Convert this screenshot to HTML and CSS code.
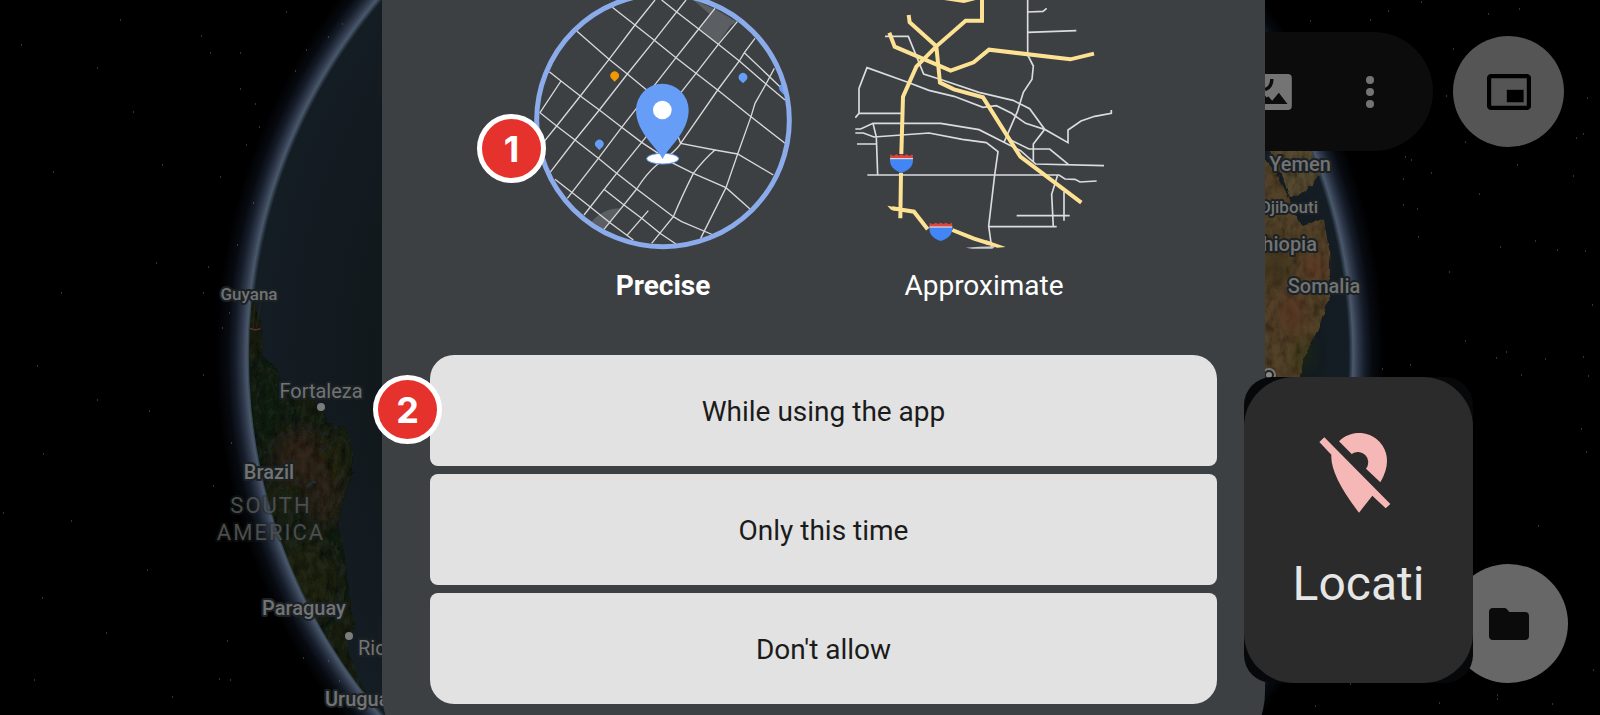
FILE: index.html
```html
<!DOCTYPE html>
<html lang="en">
<head>
<meta charset="utf-8">
<meta name="viewport" content="width=device-width, initial-scale=1">
<title>Location permission</title>
<link rel="stylesheet" href="styles.css">
</head>
<body>
<div class="stage">
  <svg class="globe" viewBox="0 0 1600 715" preserveAspectRatio="xMidYMid slice" aria-hidden="true">
    <defs>
      <radialGradient id="halo" gradientUnits="userSpaceOnUse" cx="800" cy="356" r="584">
        <stop offset="0.947" stop-color="#4b586b"/>
        <stop offset="0.956" stop-color="#2f394b"/>
        <stop offset="0.967" stop-color="#161d2a"/>
        <stop offset="0.98" stop-color="#070a10"/>
        <stop offset="1" stop-color="#000"/>
      </radialGradient>
      <radialGradient id="sea" gradientUnits="userSpaceOnUse" cx="800" cy="356" r="553">
        <stop offset="0.7" stop-color="#101719"/>
        <stop offset="0.88" stop-color="#131b21"/>
        <stop offset="0.992" stop-color="#141d23"/>
        <stop offset="1" stop-color="#46566a"/>
      </radialGradient>
      <clipPath id="disc"><circle cx="800" cy="356" r="551"/></clipPath>
      <filter id="soft" x="-50%" y="-50%" width="200%" height="200%"><feGaussianBlur stdDeviation="24"/></filter>
      <filter id="coast" x="-10%" y="-10%" width="120%" height="120%">
        <feTurbulence type="fractalNoise" baseFrequency="0.05 0.03" numOctaves="4" seed="4" result="n"/>
        <feDisplacementMap in="SourceGraphic" in2="n" scale="14" xChannelSelector="R" yChannelSelector="G" result="d"/>
        <feColorMatrix in="n" type="matrix" values="0 0 0 0 0  0 0 0 0 0  0 0 0 0 0  1.2 0 0 0 -0.45" result="dark"/>
        <feComposite in="dark" in2="d" operator="in" result="tex"/>
        <feMerge><feMergeNode in="d"/><feMergeNode in="tex"/></feMerge>
      </filter>
      <clipPath id="america"><path d="M150 90L165 130L182 190L190 290L230 325L245 370L320 400L365 445L385 490L435 505L455 570L460 640L430 720L415 800L432 880L440 950L465 1100L440 1150L470 1250L500 1300L380 1300L60 700L60 90Z"/></clipPath>
    </defs>
    <rect width="1600" height="715" fill="#000"/>
    <circle cx="800" cy="356" r="584" fill="url(#halo)"/>
    <circle cx="800" cy="356" r="553" fill="url(#sea)"/>
    <g clip-path="url(#disc)">
      <g transform="translate(200 260) scale(.3333)">
        <g filter="url(#coast)">
          <g clip-path="url(#america)">
            <rect x="0" y="0" width="560" height="1400" fill="#1a2119"/>
            <g filter="url(#soft)">
              <ellipse cx="300" cy="590" rx="70" ry="80" fill="#33251a"/>
              <ellipse cx="370" cy="700" rx="50" ry="90" fill="#2e261a"/>
              <ellipse cx="420" cy="580" rx="40" ry="80" fill="#222719"/>
              <ellipse cx="320" cy="960" rx="90" ry="120" fill="#242617"/>
              <ellipse cx="200" cy="450" rx="50" ry="120" fill="#172014"/>
              <ellipse cx="240" cy="720" rx="40" ry="60" fill="#222719"/>
            </g>
          </g>
        </g>
        <path d="M150 205l16 5 16-4M146 235v-15" stroke="#5c3130" stroke-width="4" fill="none"/>
        <path d="M165 130l-6 75M182 130l-14 75" stroke="#33291c" stroke-width="2" fill="none"/>
        <path d="M320 680l14-10 8-8M338 662l10 8" stroke="#1d3038" stroke-width="6" fill="none"/>
      </g>
      <g transform="translate(1220 0) scale(.3333)">
        <path d="M0 450H60L136 480L170 520L205 590L228 650L248 678L312 655L328 760L325 900L290 1000L250 1080L235 1160H0Z" fill="#524329" filter="url(#coast)"/>
        <path d="M150 450H285L305 520L270 560L240 585L210 595L190 540Z" fill="#544a33" filter="url(#coast)"/>
        <g filter="url(#soft)" opacity=".7">
          <ellipse cx="285" cy="800" rx="26" ry="34" fill="#6a3120"/>
          <ellipse cx="215" cy="940" rx="35" ry="60" fill="#5a3023"/>
          <ellipse cx="250" cy="1060" rx="18" ry="50" fill="#26300f"/>
          <ellipse cx="170" cy="800" rx="40" ry="60" fill="#382f18"/>
        </g>
      </g>
    </g>
    <circle cx="1269" cy="375" r="6" fill="#222" stroke="#777" stroke-width="2"/>
    <circle cx="1269" cy="375" r="3" fill="#888"/>
    <path class="stars" d="M286 12h1M201 36h1M210 53h1M240 53h1M328 37h1M342 24h1M306 50h1M295 71h1M240 89h1M255 104h1M259 127h1M246 145h1M220 177h1M253 203h1M237 245h1M208 267h1M203 293h1M229 313h1M222 328h1M203 375h1M231 443h1M213 486h1M227 641h1M303 658h1M219 679h1M230 680h1M328 661h1M339 681h1M53 172h1M97 68h1M133 112h1M61 293h1M156 263h1M37 366h1M97 400h1M149 411h1M43 454h1M71 521h1M3 513h1M42 598h1M106 633h1M147 570h1M34 680h1M172 697h1M21 45h1M120 20h1M162 165h1M1310 21h1M1370 20h1M1388 11h1M1421 2h1M1488 14h1M1519 9h1M1453 49h1M1446 96h1M1587 98h1M1576 138h1M1583 134h1M1405 157h1M1411 160h1M1403 179h1M1431 173h1M1403 205h1M1417 209h1M1465 142h1M1517 165h1M1573 176h1M1479 194h1M1418 237h1M1500 247h1M1557 250h1M1585 251h1M1449 272h1M1535 241h1M1592 305h1M1465 341h1M1506 352h1M1545 359h1M1583 357h1M1410 365h1M1382 369h1M1496 358h1M1521 375h1M1588 376h1M1581 429h1M1586 452h1M1538 526h1M1593 670h1M1497 695h1M1497 699h1M1552 704h1M1315 706h1M1350 684h1M1439 703h1"/>
    <circle class="city" cx="321" cy="407" r="4"/>
    <circle class="city" cx="349" cy="636" r="4"/>
    <g class="places">
      <text class="place small mid" x="249" y="300">Guyana</text>
      <text class="place town mid" x="321" y="398">Fortaleza</text>
      <text class="place mid" x="269" y="479">Brazil</text>
      <text class="place region mid" x="271" y="513">SOUTH</text>
      <text class="place region mid" x="271" y="540">AMERICA</text>
      <text class="place mid" x="304" y="615">Paraguay</text>
      <text class="place town" x="358" y="655">Rio</text>
      <text class="place" x="325" y="706">Uruguay</text>
      <text class="place mid" x="1300" y="171">Yemen</text>
      <text class="place small end" x="1318" y="213">Djibouti</text>
      <text class="place end" x="1317" y="251">Ethiopia</text>
      <text class="place mid" x="1324" y="293">Somalia</text>
    </g>
  </svg>

  <header class="toolbar">
    <div class="pill">
      <button class="icon-button" type="button" aria-label="Imagery">
        <svg width="44" height="36" viewBox="86 219 131 108"><rect x="86" y="219" width="131" height="108" rx="12" fill="#747474"/><path d="M104 309L130 275L142 290L146 286L158 299L178 275L204 309Z" fill="#0c0c0c"/><path d="M157 234Q157 258 137 266" fill="none" stroke="#0c0c0c" stroke-width="10"/></svg>
      </button>
      <button class="icon-button" type="button" aria-label="More options">
        <svg width="10" height="34" viewBox="0 0 10 34"><g fill="#747474"><circle cx="5" cy="5" r="4"/><circle cx="5" cy="17" r="4"/><circle cx="5" cy="29" r="4"/></g></svg>
      </button>
    </div>
    <button class="round pip" type="button" aria-label="Picture in picture">
      <svg width="44" height="36" viewBox="801 221 131 107"><rect x="807" y="227" width="119" height="95" rx="7" fill="none" stroke="#000" stroke-width="13"/><rect x="860" y="268" width="50" height="37"/></svg>
    </button>
  </header>

  <button class="round files" type="button" aria-label="Files">
    <svg width="40" height="32" viewBox="806 772 120 96"><path d="M818 772H852Q857 772 860 776L867 784H914Q926 784 926 796V856Q926 868 914 868H818Q806 868 806 856V784Q806 772 818 772Z" fill="#0b0b0b"/></svg>
  </button>

  <main class="dialog">
    <div class="accuracy" role="radiogroup" aria-label="Location accuracy">
      <label class="choice">
        <input class="choice-input" type="radio" name="accuracy" checked>
        <svg class="choice-map" viewBox="222 0 774 750">
          <defs><clipPath id="lens"><circle cx="609" cy="361" r="376"/></clipPath></defs>
          <g clip-path="url(#lens)">
            <path d="M700 0L765 27L830 65L810 78L775 130L720 88L752 45ZM395 665Q430 625 482 625L432 688Z" fill="#5b5f63"/>
            <path class="street" d="M585 0L525 75L447 178L361 288L290 378L240 440M678 0L583 121L502 222L418 330L345 420L268 520M765 25L716 87L648 173L485 382L415 475L322 595M832 65L775 133L708 220L545 427L470 520L372 645M885 115L853 158L838 183L773 270L662 430Q650 452 590 495Q560 520 530 567L490 617L432 688M655 412L662 430L765 450L833 462L940 525M943 205L918 252L885 310L873 350L833 462L798 563L722 715M853 158L985 284M457 22L525 75L583 121L648 173L708 220L773 270L873 350L975 430M350 93L447 178L502 222L560 270M268 215L303 243L361 288L418 330L485 382L545 427L640 490L700 520L798 563L870 627M303 243L240 338L290 378L345 420L415 475L470 520L530 567L640 650L665 665L760 705M765 450Q735 475 700 520Q665 590 640 650L575 730M285 538L335 577L390 620L450 668L520 720M432 568L492 615L545 655L600 700L648 732M565 632L545 655L500 707M605 0L650 36L716 87L775 133L838 183L918 252L975 300"/>
            <path d="M464 245L453 234A13 13 0 1 1 475 234Z" fill="#f29900"/>
            <path d="M849 250L838 239A13 13 0 1 1 860 239ZM418 450L407 439A13 13 0 1 1 429 439ZM975 288L960 272A13 13 0 0 1 965 252Z" fill="#669df6"/>
          </g>
          <circle cx="609" cy="361" r="379" fill="none" stroke="#8babeb" stroke-width="15"/>
          <ellipse cx="608" cy="476" rx="48" ry="16" fill="#fff" stroke="#669df6" stroke-width="3"/>
          <path d="M608 478C596 445 528 400 528 330A79 79 0 0 1 686 330C686 400 620 445 608 478Z" fill="#669df6"/>
          <circle cx="607" cy="330" r="28" fill="#fff"/>
        </svg>
        <span class="choice-name">Precise</span>
        <span class="badge">1</span>
      </label>
      <label class="choice">
        <input class="choice-input" type="radio" name="accuracy">
        <svg class="choice-map" viewBox="78 0 774 750">
          <path class="road" d="M596 0V165L613 198L609 238L583 277L565 335L526 425M596 36L642 34L653 25M596 97L742 92M168 109H238L284 222L340 240L450 277L552 301L602 326L647 388L717 428V390L756 363L797 349L847 340V330M79 353L90 340V265L114 203L232 245L300 271L375 289L462 322L502 317L548 340L590 370L647 388L613 432V487M90 340H218M79 387H95L132 370H335L450 389L575 452L620 492L825 497M79 399H103L135 411L300 399L400 418L472 428L507 455L497 525L479 678L488 742M132 370L142 411L146 525M84 432H142M115 525H690L708 537L738 538L753 546L803 543M545 420L600 447H662L718 493M686 525L668 583L673 682M705 575V662M563 647H722M479 680H683"/>
          <path d="M410 743L450 740L500 739L490 746H430Z" fill="#c8cacd"/>
          <path class="highway" d="M459 0V62H410L322 139L262 200L222 290L217 462M239 45L242 67L322 139L333 248L375 268L462 292L574 470L757 608M181 98L197 140L365 212L434 187L480 149L724 178L795 161M216 518L214 655M190 625L255 635L296 688M370 690L435 716L480 730"/>
          <path d="M345 0H440L405 9ZM175 617L200 622V632L186 629ZM472 721L530 741L505 743L470 733Z" fill="#fde293"/>
          <g id="shield">
            <path d="M184 463L193 468L203 463L209 467L217 463L226 467L232 463L242 468L251 463L252 476H183Z" fill="#e0443a"/>
            <path d="M183 476H252Q254 507 217 518Q181 507 183 476Z" fill="#4285f4"/>
            <path d="M183 476H252" stroke="#eee" stroke-width="3"/>
          </g>
          <use href="#shield" x="118" y="205"/>
        </svg>
        <span class="choice-name">Approximate</span>
      </label>
    </div>
    <div class="actions">
      <button class="action" type="button">While using the app<span class="badge">2</span></button>
      <button class="action" type="button">Only this time</button>
      <button class="action" type="button">Don't allow</button>
    </div>
  </main>

  <aside class="tile">
    <div class="tile-face">
      <svg width="80" height="80" viewBox="297 248 240 240"><path fill="#f6b8b6" d="M298 275L313 261L511 461L497 474L457 436L417 487Q330 375 334 313ZM357 273A84 84 0 0 1 501 333Q501 362 481 396L438 355A31 31 0 0 0 395 311Z"/></svg>
      <span class="tile-name">Locati</span>
    </div>
  </aside>
</div>
</body>
</html>
```
FILE: styles.css
```css
* { box-sizing: border-box; }

body {
  margin: 0;
  background: #000;
  color: #fff;
  font-family: Roboto, sans-serif;
}

button {
  padding: 0;
  border: 0;
  font: inherit;
  cursor: pointer;
}

svg { display: block; }

.stage {
  position: relative;
  height: 100vh;
  padding-left: 47px;
  overflow: hidden;
}

/* Map behind the dialog */
.globe {
  position: absolute;
  inset: 0;
  width: 100%;
  height: 100%;
}

.stars {
  fill: none;
  stroke: #6a6a6a;
  stroke-width: 1;
}

.city { fill: #7b7d7c; }

.place {
  fill: #717375;
  stroke: #1c2123;
  stroke-width: 4px;
  stroke-linejoin: round;
  paint-order: stroke;
  font-size: 20px;
  font-weight: 500;
}

.small { font-size: 17px; }
.town { font-weight: 400; }
.mid { text-anchor: middle; }
.end { text-anchor: end; }

.region {
  fill: #4b4e4b;
  stroke-opacity: 0.4;
  font-size: 22px;
  font-weight: 400;
  letter-spacing: 2px;
}

/* Controls over the map */
.toolbar {
  position: absolute;
  top: 32px;
  right: 36px;
  display: flex;
  align-items: center;
  gap: 20px;
}

.pill {
  display: flex;
  align-items: center;
  gap: 73px;
  height: 119px;
  padding: 0 58px 0 120px;
  border-radius: 60px;
  background: #0c0c0c;
}

.icon-button { background: none; }

.round {
  display: flex;
  align-items: center;
  justify-content: center;
  border-radius: 50%;
}

.pip {
  width: 111px;
  height: 111px;
  background: #555;
}

.files {
  position: absolute;
  right: 32px;
  bottom: 32px;
  width: 119px;
  height: 119px;
  background: #676767;
}

/* Permission dialog */
.dialog {
  position: relative;
  width: 100%;
  max-width: 883px;
  margin: 0 auto;
  padding: 0 48px 68px;
  border-radius: 0 0 80px 80px;
  background: #3c4043;
}

.accuracy {
  display: flex;
  justify-content: center;
  gap: 63px;
}

.choice {
  position: relative;
  width: 258px;
  text-align: center;
}

.choice-input {
  position: absolute;
  opacity: 0;
}

.choice-map {
  width: 100%;
  margin-bottom: 20px;
}

.choice-name {
  display: block;
  font-size: 28px;
  line-height: 32px;
}

.choice-input:checked ~ .choice-name { font-weight: 700; }

.street {
  fill: none;
  stroke: #d6d8da;
  stroke-width: 4;
}

.road {
  fill: none;
  stroke: #dadce0;
  stroke-width: 5;
}

.highway {
  fill: none;
  stroke: #fde293;
  stroke-width: 12;
}

.actions {
  display: flex;
  flex-direction: column;
  gap: 8px;
  padding-top: 53px;
}

.action {
  position: relative;
  height: 111px;
  padding-top: 2px;
  border-radius: 8px;
  background: #e2e2e2;
  color: #1b1b1b;
  font-size: 28px;
}

.action:first-child { border-radius: 24px 24px 8px 8px; }
.action:last-child { border-radius: 8px 8px 24px 24px; }

.badge {
  position: absolute;
  top: 114px;
  left: -57px;
  width: 69px;
  height: 69px;
  border: 5px solid #fff;
  border-radius: 50%;
  background: #e5322d;
  color: #fff;
  font-family: Inter, sans-serif;
  font-size: 36px;
  font-weight: 700;
  line-height: 60px;
  text-align: center;
}

.action .badge { top: 20px; }

/* Quick settings tile */
.tile {
  position: absolute;
  right: 127px;
  bottom: 32px;
  width: 229px;
  height: 306px;
  border-radius: 28px;
  background: #070809;
}

.tile-face {
  display: flex;
  flex-direction: column;
  align-items: center;
  gap: 43px;
  height: 100%;
  padding-top: 56px;
  border-radius: 50px;
  background: #2b2b2b;
}

.tile-name {
  color: #e6e6e6;
  font-size: 48px;
  line-height: 56px;
}
```
